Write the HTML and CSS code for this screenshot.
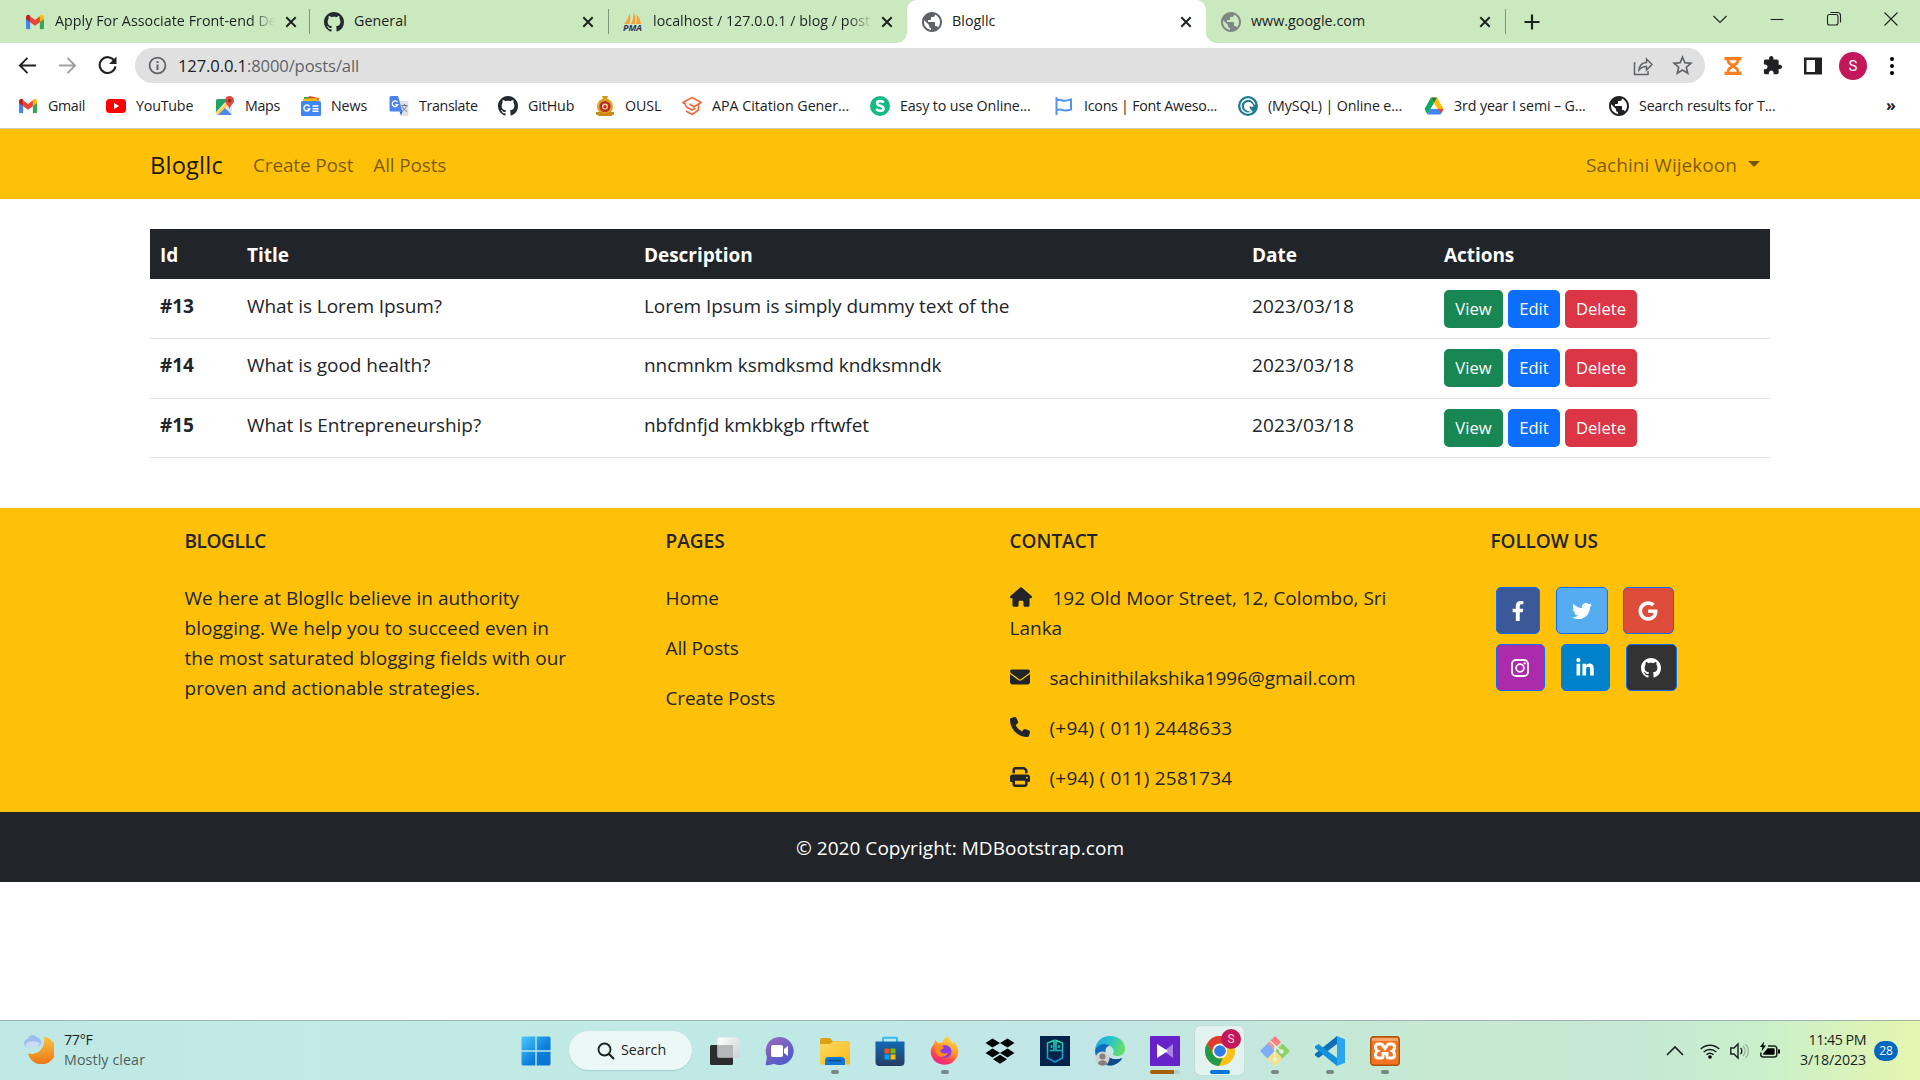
FILE: index.html
```html
<!DOCTYPE html>
<html lang="en">
<head>
<meta charset="utf-8">
<title>Blogllc</title>
<link rel="stylesheet" href="styles.css">
</head>
<body>
<svg class="defs" width="0" height="0" aria-hidden="true">
  <defs>
    <symbol id="globe" viewBox="2 2 20 20"><path d="M12 2C6.480 2 2 6.480 2 12s4.480 10 10 10 10-4.480 10-10S17.520 2 12 2zm-1 17.930c-3.950-.49-7-3.850-7-7.930 0-.62.08-1.210.21-1.790L9 15v1c0 1.100.9 2 2 2v1.930zm6.900-2.540c-.26-.81-1-1.390-1.900-1.390h-1v-3c0-.55-.45-1-1-1H8v-2h2c.55 0 1-.45 1-1V7h2c1.100 0 2-.9 2-2v-.41c2.930 1.190 5 4.060 5 7.410 0 2.080-.8 3.970-2.100 5.390z"/></symbol>
    <symbol id="github" viewBox="0 0 16 16"><path d="M8 0C3.58 0 0 3.58 0 8c0 3.54 2.29 6.53 5.47 7.59.4.07.55-.17.55-.38 0-.19-.01-.82-.01-1.49-2.01.37-2.53-.49-2.69-.94-.09-.23-.48-.94-.82-1.13-.28-.15-.68-.52-.01-.53.63-.01 1.08.58 1.23.82.72 1.21 1.87.87 2.33.66.07-.52.28-.87.51-1.07-1.78-.2-3.64-.89-3.64-3.95 0-.87.31-1.59.82-2.15-.08-.2-.36-1.02.08-2.12 0 0 .67-.21 2.2.82.64-.18 1.32-.27 2-.27.68 0 1.36.09 2 .27 1.53-1.04 2.2-.82 2.2-.82.44 1.1.16 1.92.08 2.12.51.56.82 1.27.82 2.15 0 3.07-1.87 3.75-3.65 3.95.29.25.54.73.54 1.48 0 1.07-.01 1.93-.01 2.2 0 .21.15.46.55.38A8.01 8.01 0 0 0 16 8c0-4.42-3.58-8-8-8z"/></symbol>
    <symbol id="gmail" viewBox="0 0 20 16"><path fill="#4285f4" d="M0 3v11.6C0 15.4.6 16 1.4 16h3.2V7z"/><path fill="#34a853" d="M15.4 16h3.2c.8 0 1.4-.6 1.4-1.4V3l-4.600 4z"/><path fill="#fbbc04" d="M15.400 2.200v6L20 4.700V2.500C20 .3 17.600-.8 15.900.5z"/><path fill="#ea4335" d="M4.600 8.200v-6.500L10 5.800l5.400-4.100v6.500L10 12.300z"/><path fill="#c5221f" d="M0 2.500v2.200l4.600 3.500v-7L4.100.5C2.400-.8 0 .3 0 2.500z"/></symbol>
    <symbol id="close" viewBox="0 0 12 12"><path d="M1.300 1.300l9.400 9.400m0-9.400l-9.400 9.400" stroke="#1d2420" stroke-width="2" fill="none"/></symbol>
  </defs>
</svg>

<header class="browser">
  <div class="tabs">
    <div class="tab">
      <svg class="fav" viewBox="0 0 20 20"><use href="#gmail" x="1" y="2.500" width="18" height="15"/></svg>
      <span class="tab-title fade">Apply For Associate Front-end De</span>
      <svg class="x"><use href="#close"/></svg>
    </div>
    <div class="tab">
      <svg class="fav" fill="#22292f"><use href="#github"/></svg>
      <span class="tab-title">General</span>
      <svg class="x"><use href="#close"/></svg>
    </div>
    <div class="tab last-before">
      <svg class="fav pma" viewBox="0 0 20 20"><path fill="#f9a13a" d="M1 12C4 9 6 4.500 6.500 1c1.200 3 1.200 8-.2 11zM8 12C10 8 10.500 4 10.300 0c2.300 4 2.600 8.500 1.700 12zM13 12c1-3.500 1-7 .3-10 2.700 2.500 4.400 6.500 4.700 10z"/><text x="0" y="19" font-size="8" font-weight="700" font-style="italic" fill="#33355f" textLength="19" lengthAdjust="spacingAndGlyphs">PMA</text></svg>
      <span class="tab-title fade">localhost / 127.0.0.1 / blog / post</span>
      <svg class="x"><use href="#close"/></svg>
    </div>
    <div class="tab active">
      <svg class="fav" fill="#5f6368"><use href="#globe"/></svg>
      <span class="tab-title">Blogllc</span>
      <svg class="x"><use href="#close"/></svg>
    </div>
    <div class="tab">
      <svg class="fav" fill="#7f8684"><use href="#globe"/></svg>
      <span class="tab-title">www.google.com</span>
      <svg class="x"><use href="#close"/></svg>
    </div>
    <svg class="plus" viewBox="0 0 16 16"><path d="M8 .5v15M.5 8h15" stroke="#1d2420" stroke-width="2.200"/></svg>
    <div class="window-buttons">
      <svg viewBox="0 0 16 16"><path d="M1.500 5l6.500 6.500L14.500 5"/></svg>
      <svg viewBox="0 0 16 16"><path d="M1.500 8.500h13"/></svg>
      <svg viewBox="0 0 16 16"><rect x="1.500" y="3.500" width="10.500" height="10.500" rx="2"/><path d="M4.500 1.500h7a3 3 0 0 1 3 3v7"/></svg>
      <svg viewBox="0 0 16 16"><path d="M1.500 1.500l13 13m0-13l-13 13"/></svg>
    </div>
  </div>

  <div class="toolbar">
    <svg class="nav-icon" viewBox="0 0 18 18"><path d="M17 9H2M9 1.800L1.800 9 9 16.200" stroke="#1f2124" stroke-width="1.800" fill="none"/></svg>
    <svg class="nav-icon" viewBox="0 0 18 18"><path d="M1 9h15M9 1.800L16.200 9 9 16.200" stroke="#9d9fa2" stroke-width="1.800" fill="none"/></svg>
    <svg class="nav-icon" viewBox="0 0 18 18"><path d="M15.500 4.700A7.500 7.500 0 1 0 16.500 9.800" stroke="#1f2124" stroke-width="2" fill="none"/><path d="M17.500.5v7h-7z" fill="#1f2124"/></svg>
    <div class="omnibox">
      <svg class="info" viewBox="0 0 18 18"><circle cx="9" cy="9" r="7.500" fill="none" stroke="#5f6368" stroke-width="1.700"/><path d="M9 8v5.200M9 4.800v1.900" stroke="#5f6368" stroke-width="1.900"/></svg>
      <span class="url">127.0.0.1<span>:8000/posts/all</span></span>
      <svg class="share" viewBox="0 0 20 20"><path d="M2.500 7H1.500v11.500h13.500v-3.500M6 14c.5-5 3-7.200 7.500-7.500V3l5.500 5.500-5.500 5.500v-3.500c-3.500 0-5.500 1-7.500 3.500z" fill="none" stroke="#5f6368" stroke-width="1.500"/></svg>
      <svg class="star" viewBox="2 2 20 20"><path fill="#5f6368" d="M22 9.240l-7.190-.62L12 2 9.190 8.630 2 9.240l5.460 4.730L5.820 21 12 17.270 18.180 21l-1.630-7.030L22 9.240zM12 15.400l-3.760 2.270 1-4.280-3.320-2.880 4.380-.38L12 6.100l1.710 4.040 4.380.38-3.320 2.880 1 4.280L12 15.400z"/></svg>
    </div>
    <div class="extensions">
      <svg viewBox="0 0 20 20"><path fill="#fb7e20" fill-rule="evenodd" d="M1.500 1h17v3.200h-2.200c0 3-1.800 4.300-4 5.800 2.200 1.500 4 2.800 4 5.800h2.200V19h-17v-3.200h2.200c0-3 1.800-4.300 4-5.800-2.200-1.500-4-2.800-4-5.800H1.500zM6.200 4.200C6.700 6 8.500 7 10 7.800 11.500 7 13.300 6 13.800 4.200zM6.200 15.800h7.600c-.3-1.800-2.300-3.200-3.800-4-1.500.8-3.500 2.200-3.800 4z"/></svg>
      <svg viewBox="1 1 23 23"><path fill="#202124" d="M20.500 11H19V7c0-1.100-.9-2-2-2h-4V3.500C13 2.120 11.880 1 10.500 1S8 2.120 8 3.500V5H4c-1.100 0-1.990.9-1.990 2v3.800H3.500c1.490 0 2.700 1.210 2.700 2.700s-1.210 2.700-2.700 2.700H2V20c0 1.100.9 2 2 2h3.800v-1.500c0-1.490 1.210-2.700 2.700-2.700 1.490 0 2.700 1.210 2.700 2.700V22H17c1.100 0 2-.9 2-2v-4h1.500c1.380 0 2.500-1.120 2.500-2.500S21.880 11 20.500 11z"/></svg>
      <svg viewBox="0 0 20 20"><path fill="#202124" fill-rule="evenodd" d="M1 1.500h18v17H1zM3.500 4v12H12V4z"/></svg>
      <span class="avatar">S</span>
      <svg class="dots" viewBox="0 0 20 20"><circle cx="10" cy="3" r="2"/><circle cx="10" cy="10" r="2"/><circle cx="10" cy="17" r="2"/></svg>
    </div>
  </div>

  <nav class="bookmarks">
    <a class="tight"><svg viewBox="0 0 20 20"><use href="#gmail" x="1" y="2.500" width="18" height="15"/></svg>Gmail</a>
    <a class="yt"><svg viewBox="0 0 20 20"><rect y="3" width="20" height="14" rx="3.500" fill="#f00"/><path d="M8 7v6l5.200-3z" fill="#fff"/></svg>YouTube</a>
    <a class="tight"><svg viewBox="0 0 20 20"><rect x="1" y="3" width="16" height="16" rx="2" fill="#e4e6e8"/><path d="M1 5a2 2 0 0 1 2-2h10L1 16z" fill="#1ea362"/><path d="M2 19l7-8 8 8z" fill="#4a89f3"/><path d="M1 17L14 4l2 2L3 19z" fill="#ffd04b"/><path d="M14.500 0A4.500 4.500 0 0 0 10 4.500c0 3.500 3.800 4 4.500 9 .7-5 4.500-5.500 4.500-9A4.500 4.500 0 0 0 14.500 0z" fill="#dd4b3e"/><circle cx="14.500" cy="4.500" r="1.600" fill="#80211a"/></svg>Maps</a>
    <a><svg viewBox="0 0 20 20"><path d="M3 1h11v6H3z" fill="#34a853"/><path d="M8 0l10 2-1 6H6z" fill="#ea4335"/><path d="M2 3l14-1 2 6H2z" fill="#fbbc04"/><rect y="5" width="20" height="15" rx="1.500" fill="#4285f4"/><path d="M8.500 10.500a3 3 0 1 0 .3 2.500H6.300M11.500 10h6M11.500 12.700h6M11.500 15.300h6" stroke="#fff" stroke-width="1.500" fill="none"/></svg>News</a>
    <a class="tight"><svg viewBox="0 0 20 20"><path d="M8 5h10a1.500 1.500 0 0 1 1.500 1.500v12A1.500 1.500 0 0 1 18 20h-6z" fill="#dfe1e4"/><path d="M2 0h7l4.500 15.500H2A1.500 1.500 0 0 1 .5 14V1.500A1.500 1.500 0 0 1 2 0z" fill="#4a84ee"/><path d="M8.500 6.200a2.800 2.800 0 1 0 .3 2.400H6.300" stroke="#fff" stroke-width="1.300" fill="none"/><path d="M12.500 9.500h6M15.500 8v1.500M17.500 9.500c-.8 3-2.500 4.500-4.500 6M13.500 10.500c1 2.500 2.500 4 4.500 5" stroke="#6b7682" fill="none"/><path d="M10.500 15.500h3L12 19.500z" fill="#2b5fc0"/></svg>Translate</a>
    <a><svg fill="#22292f"><use href="#github"/></svg>GitHub</a>
    <a><svg viewBox="0 0 20 20"><path d="M7 0h6l-1 3h-4z" fill="#d49a1e"/><circle cx="10" cy="10.500" r="8" fill="#e0a11b"/><circle cx="10" cy="10.500" r="5.500" fill="#b4302a"/><circle cx="10" cy="10.500" r="3" fill="#f0d9a0"/><circle cx="10" cy="10.800" r="1.700" fill="#c22"/><path d="M1 16h4l5 1.500 5-1.500h4v2.500a18 18 0 0 1-18 0z" fill="#c98a16"/></svg>OUSL</a>
    <a class="apa"><svg viewBox="0 0 20 20"><path d="M3.500 10V8L.800 6.500 10 1.500l9.200 5L12 10.800 7.500 8M3.500 10.500L10 14l3.500-2M16.500 8.500V14L10 18.500 4 15" fill="none" stroke="#f4673c" stroke-width="1.600" stroke-linejoin="round"/></svg>APA Citation Gener...</a>
    <a><svg viewBox="0 0 20 20"><circle cx="10" cy="10" r="10" fill="#11bb83"/><path d="M13.800 6.500C12 4.500 7 4.600 7 7.300c0 3 6.500 2 6.500 5.200 0 3-5.500 3-7.300.5" stroke="#fff" stroke-width="2.600" fill="none"/></svg>Easy to use Online...</a>
    <a class="fa"><svg viewBox="0 0 20 20"><path d="M2.500 1v18M3 4.500c3-2 5 .5 8 .3 2-.1 3.500-.8 6-1.300v10c-3 .8-4.500 1.300-7 .8-2.500-.6-4-1.500-7-.3" fill="none" stroke="#5394ec" stroke-width="2"/></svg>Icons | Font Aweso...</a>
    <a><svg viewBox="0 0 20 20"><circle cx="10" cy="10" r="10" fill="#217a94"/><path d="M14 15.800A7 7 0 1 1 16.800 8.500" stroke="#fff" stroke-width="1.400" fill="none"/><path d="M7 13.500C4.500 9 7 6 10.500 6c3 0 4.500 2 5 5l-4-.8c.3 2.500 1.500 4 3.500 5.300-3 .5-6-.5-8-2z" fill="#fff"/></svg>(MySQL) | Online e...</a>
    <a><svg viewBox="0 0 20 20"><path d="M7 1.500h6l6.500 11.500h-6z" fill="#fbbc04"/><path d="M7 1.500l3 5.200L3.500 18.500.5 13z" fill="#11a861"/><path d="M6.300 13h13.200l-3 5.500h-13z" fill="#4285f4"/><path d="M13.500 13h6l-2.300 4.200z" fill="#ea4335"/><path d="M7 1.500h6l-3 5.200z" fill="#188038"/></svg>3rd year I semi – G...</a>
    <a><svg fill="#202124"><use href="#globe"/></svg>Search results for T...</a>
    <b>»</b>
  </nav>
</header>

<div class="site-nav">
  <div class="container">
    <a class="brand">Blogllc</a>
    <a class="link">Create Post</a>
    <a class="link">All Posts</a>
    <a class="link user">Sachini Wijekoon <i class="caret"></i></a>
  </div>
</div>

<main>
  <table>
    <colgroup><col class="c-id"><col class="c-title"><col class="c-desc"><col class="c-date"><col></colgroup>
    <thead><tr><th>Id</th><th>Title</th><th>Description</th><th>Date</th><th>Actions</th></tr></thead>
    <tbody>
      <tr><th>#13</th><td>What is Lorem Ipsum?</td><td>Lorem Ipsum is simply dummy text of the</td><td>2023/03/18</td><td><div class="actions"><a class="btn view">View</a><a class="btn edit">Edit</a><a class="btn delete">Delete</a></div></td></tr>
      <tr><th>#14</th><td>What is good health?</td><td>nncmnkm ksmdksmd kndksmndk</td><td>2023/03/18</td><td><div class="actions"><a class="btn view">View</a><a class="btn edit">Edit</a><a class="btn delete">Delete</a></div></td></tr>
      <tr><th>#15</th><td>What Is Entrepreneurship?</td><td>nbfdnfjd kmkbkgb rftwfet</td><td>2023/03/18</td><td><div class="actions"><a class="btn view">View</a><a class="btn edit">Edit</a><a class="btn delete">Delete</a></div></td></tr>
    </tbody>
  </table>
</main>

<footer>
  <div class="columns">
    <section class="about"><h6>BLOGLLC</h6><p>We here at Blogllc believe in authority blogging. We help you to succeed even in the most saturated blogging fields with our proven and actionable strategies.</p></section>
    <section class="pages"><h6>PAGES</h6><p>Home</p><p>All Posts</p><p>Create Posts</p></section>
    <section class="contact"><h6>CONTACT</h6>
      <p><svg class="house" viewBox="0 0 576 512"><path d="M575.8 255.500c0 18-15 32.100-32 32.100h-32l.7 160.200c0 2.700-.2 5.400-.5 8.100V472c0 22.100-17.900 40-40 40H392c-22.100 0-40-17.900-40-40v-88c0-17.700-14.300-32-32-32h-64c-17.700 0-32 14.300-32 32v88c0 22.100-17.900 40-40 40h-80c-22.100 0-40-17.900-40-40V287.600H32c-18 0-32-14-32-32.100 0-9 3-17 10-24L266.400 8c7-7 15-8 22-8s15 2 21 7l255.400 224.500c8 7 12 15 11 24z"/></svg>192 Old Moor Street, 12, Colombo, Sri Lanka</p>
      <p><svg viewBox="0 0 512 512"><path d="M48 64C21.500 64 0 85.500 0 112c0 15.100 7.100 29.300 19.200 38.400l217.600 163.200c11.400 8.500 27 8.500 38.400 0l217.600-163.200c12.100-9.100 19.200-23.300 19.200-38.400 0-26.500-21.500-48-48-48zM0 176v208c0 35.300 28.700 64 64 64h384c35.300 0 64-28.700 64-64V176L294.400 339.200c-22.800 17.100-54 17.100-76.800 0z"/></svg><span class="mail">sachinithilakshika1996@gmail.com</span></p>
      <p class="phone"><svg viewBox="0 0 512 512"><path d="M164.900 24.600c-7.700-18.600-28-28.500-47.400-23.200l-88 24C12.100 30.200 0 46 0 64c0 247.400 200.600 448 448 448 18 0 33.800-12.100 38.600-29.500l24-88c5.300-19.400-4.600-39.700-23.200-47.400l-96-40c-16.300-6.800-35.200-2.100-46.300 11.600L304.700 368C234.300 334.700 177.300 277.700 144 207.300l49.300-40.300c13.700-11.200 18.400-30 11.600-46.300z"/></svg>(+94) ( 011) 2448633</p>
      <p class="phone"><svg viewBox="0 0 512 512"><path fill-rule="evenodd" d="M128 0C92.700 0 64 28.700 64 64v96h64V64h226.700L384 93.300V160h64V93.300c0-17-6.700-33.300-18.700-45.300L400 18.700C388 6.700 371.700 0 354.700 0zM384 352v96H128v-96zm64 32h32c17.700 0 32-14.300 32-32v-96c0-35.300-28.700-64-64-64H64c-35.300 0-64 28.700-64 64v96c0 17.700 14.300 32 32 32h32v64c0 35.300 28.700 64 64 64h256c35.300 0 64-28.700 64-64zM432 248a24 24 0 1 1 0 48 24 24 0 1 1 0-48z"/></svg>(+94) ( 011) 2581734</p>
    </section>
    <section class="follow"><h6>FOLLOW US</h6>
      <div class="socials">
        <a class="fb"><svg viewBox="0 0 320 512"><path d="M279.140 288l14.220-92.660h-88.910v-60.130c0-25.350 12.420-50.060 52.240-50.060h40.420V6.260S260.430 0 225.360 0c-73.220 0-121.080 44.380-121.080 124.720v70.620H22.890V288h81.390v224h100.170V288z"/></svg></a>
        <a class="tw"><svg viewBox="0 0 512 512"><path d="M459.370 151.716c.325 4.548.325 9.097.325 13.645 0 138.720-105.583 298.558-298.558 298.558-59.452 0-114.680-17.219-161.137-47.106 8.447.974 16.568 1.299 25.340 1.299 49.055 0 94.213-16.568 130.274-44.832-46.132-.975-84.792-31.188-98.112-72.772 6.498.974 12.995 1.624 19.818 1.624 9.421 0 18.843-1.300 27.614-3.573-48.081-9.747-84.143-51.980-84.143-102.985v-1.299c13.969 7.797 30.214 12.670 47.431 13.319-28.264-18.843-46.781-51.005-46.781-87.391 0-19.492 5.197-37.360 14.294-52.954 51.655 63.675 129.300 105.258 216.365 109.807-1.624-7.797-2.599-15.918-2.599-24.040 0-57.828 46.782-104.934 104.934-104.934 30.213 0 57.502 12.670 76.670 33.137 23.715-4.548 46.456-13.320 66.599-25.340-7.798 24.366-24.366 44.833-46.132 57.827 21.117-2.273 41.584-8.122 60.426-16.243-14.292 20.791-32.161 39.308-52.628 54.253z"/></svg></a>
        <a class="gg"><svg viewBox="0 0 488 512"><path d="M488 261.800C488 403.300 391.100 504 248 504 110.800 504 0 393.200 0 256S110.800 8 248 8c66.800 0 123 24.500 166.300 64.900l-67.500 64.900C258.500 52.600 94.300 116.600 94.300 256c0 86.500 69.100 156.600 153.700 156.600 98.200 0 135-70.400 140.800-106.900H248v-85.300h236.100c2.300 12.700 3.900 24.900 3.900 41.400z"/></svg></a>
      </div>
      <div class="socials">
        <a class="ig"><svg viewBox="0 0 18 20"><rect x="1" y="2" width="16" height="16" rx="4" fill="none" stroke="#fff" stroke-width="1.800"/><circle cx="9" cy="10" r="3.900" fill="none" stroke="#fff" stroke-width="1.700"/><circle cx="13.700" cy="5.400" r="1.100"/></svg></a>
        <a class="li"><svg viewBox="0 0 448 512"><path d="M100.280 448H7.400V148.900h92.880zM53.790 108.100C24.090 108.100 0 83.500 0 53.800a53.790 53.790 0 0 1 107.580 0c0 29.700-24.100 54.300-53.790 54.300zM447.900 448h-92.680V302.400c0-34.700-.7-79.200-48.290-79.200-48.290 0-55.690 37.700-55.690 76.700V448h-92.780V148.900h89.080v40.800h1.300c12.400-23.500 42.690-48.300 87.880-48.300 94 0 111.280 61.900 111.280 142.300V448z"/></svg></a>
        <a class="gh"><svg><use href="#github"/></svg></a>
      </div>
    </section>
  </div>
  <div class="copyright">© 2020 Copyright: MDBootstrap.com</div>
</footer>

<div class="taskbar">
  <div class="weather">
    <svg viewBox="0 0 30 30"><defs><linearGradient id="moon" x2="0" y2="1"><stop stop-color="#f6c443"/><stop offset="1" stop-color="#ee7716"/></linearGradient></defs><path d="M20 2.500a14 14 0 1 1-16 17c9 2 17.500-4 16-17z" fill="url(#moon)"/><path d="M4.500 13a4 4 0 0 1-.5-8 5 5 0 0 1 9-1.500 4.500 4.500 0 0 1 4 6c-.5 2-2 3.500-4 3.500z" fill="#9cbdf0"/><path d="M4 8c4-1 7-1 12 1-1 3-2 4-4 4H4.500c-3 0-4-3-.5-5z" fill="#c9dcfb"/></svg>
    <div><div class="temp">77°F</div><div class="sky">Mostly clear</div></div>
  </div>
  <svg class="start" viewBox="0 0 30 30"><defs><linearGradient id="win" x2="1" y2="1"><stop stop-color="#4cc9fb"/><stop offset=".6" stop-color="#0a7edc"/><stop offset="1" stop-color="#0a6fd0"/></linearGradient></defs><path fill="url(#win)" d="M.500 2a1.500 1.500 0 0 1 1.500-1.500h12.300v13.800H.500zM15.700.500H28a1.500 1.500 0 0 1 1.500 1.500v12.300H15.700zM.500 15.700h13.800v13.800H2A1.500 1.500 0 0 1 .500 28zM15.700 15.700h13.800V28a1.500 1.500 0 0 1-1.500 1.500H15.700z"/></svg>
  <div class="search"><svg viewBox="0 0 18 18"><circle cx="7.500" cy="7.500" r="6" fill="none" stroke="#1b1f1f" stroke-width="1.800"/><path d="M12 12l5 5" stroke="#1b1f1f" stroke-width="2.200"/></svg><span>Search</span></div>
  <div class="apps">
    <div class="app"><svg viewBox="0 0 30 30"><defs><linearGradient id="tv" x2="1" y2="1"><stop stop-color="#fff"/><stop offset="1" stop-color="#ccd1d1"/></linearGradient></defs><rect y="9" width="23" height="20" rx="1.500" fill="#2c2c2c"/><rect x="7.500" y="1.500" width="22" height="20" rx="1.500" fill="url(#tv)"/><path d="M7.500 9H23v12.500H9a1.500 1.500 0 0 1-1.500-1.500z" fill="#b5b8b8"/></svg></div>
    <div class="app"><svg viewBox="0 0 30 30"><defs><linearGradient id="chat" x2=".6" y2="1"><stop stop-color="#9a6bbb"/><stop offset="1" stop-color="#5059c9"/></linearGradient></defs><path d="M15 1a14 14 0 1 1-6 26.800C6 29 3 29.500.500 29L2 21A14 14 0 0 1 15 1z" fill="url(#chat)"/><rect x="6" y="9" width="12" height="12" rx="2" fill="#fff"/><path d="M19 13l4-3v10l-4-3z" fill="#fff"/></svg></div>
    <div class="app"><svg viewBox="0 0 30 30"><defs><linearGradient id="fold" x2="1" y2="1"><stop stop-color="#ffd964"/><stop offset="1" stop-color="#fbb917"/></linearGradient></defs><path d="M0 3.500A1.500 1.500 0 0 1 1.500 2H10l3 3.500H28.500A1.500 1.500 0 0 1 30 7v6H0z" fill="#e0a016"/><path d="M0 8h10l3-2.500h16A1 1 0 0 1 30 6.500V27a1.500 1.500 0 0 1-1.500 1.500h-27A1.500 1.500 0 0 1 0 27z" fill="url(#fold)"/><path d="M5 29v-4.500A3.500 3.500 0 0 1 8.500 21h13a3.500 3.500 0 0 1 3.500 3.500V29z" fill="#1077cf"/><path d="M8.500 24.700h13" stroke="#0b4c94" stroke-width="1.400"/></svg><i></i></div>
    <div class="app"><svg viewBox="0 0 30 30"><defs><linearGradient id="store" x2="0" y2="1"><stop stop-color="#116ab3"/><stop offset="1" stop-color="#253c63"/></linearGradient></defs><path d="M8 8V2.700a1 1 0 0 1 1-1h12a1 1 0 0 1 1 1V8" fill="none" stroke="#35b8f1" stroke-width="2"/><path d="M.500 5.500h29V26a4 4 0 0 1-4 4h-21a4 4 0 0 1-4-4z" fill="url(#store)"/><path d="M9.500 12.500h5v5h-5z" fill="#f25022"/><path d="M15.500 12.500h5v5h-5z" fill="#7fba00"/><path d="M9.500 18.500h5v5h-5z" fill="#00a4ef"/><path d="M15.500 18.500h5v5h-5z" fill="#ffb900"/></svg></div>
    <div class="app"><svg viewBox="0 0 30 30"><defs><linearGradient id="fox" x1=".8" y1="0" x2=".3" y2="1"><stop stop-color="#ffe84a"/><stop offset=".45" stop-color="#ff9a2b"/><stop offset=".75" stop-color="#ff4052"/><stop offset="1" stop-color="#e8228c"/></linearGradient></defs><path d="M4 8l1-4 3 3 4 0c1-4 4-6 6-7 1 4 4 5 5 8l1.500-2c4 5 5 10 2.500 15A14 14 0 0 1 1.500 20C0 15 1 11 4 8z" fill="url(#fox)"/><circle cx="15" cy="15.500" r="6.500" fill="#8a3de0"/><path d="M5 11c4-3 8-1 9 1l-4 2.500c1 3 5 4 8 2-1 5-9 6-12 1z" fill="#ff8a1e"/></svg><i></i></div>
    <div class="app"><svg viewBox="0 0 30 30"><path d="M7.500 2.500L15 7l-7.500 4.500L.500 7zM22.500 2.500L29.500 7l-7 4.500L15 7zM7.500 12.500L15 17l-7.500 4.500-7-4.500zM22.500 12.500l7 4.500-7 4.500L15 17zM15 18.800l7 4.400-7 4.500-7-4.500z"/></svg></div>
    <div class="app"><svg viewBox="0 0 30 30"><defs><linearGradient id="pg" x2="0" y2="1"><stop stop-color="#22d6ad"/><stop offset="1" stop-color="#168bd6"/></linearGradient></defs><path d="M0 0h30v30H0z" fill="#04234a"/><path d="M7.500 20V7l6.500-2.500v10H9.500M7.500 17v5l7.500 4 7.500-4V7L16 4.500v10h6M19 9v3M11.500 9v3" fill="none" stroke="url(#pg)" stroke-width="1.600"/></svg></div>
    <div class="app"><svg viewBox="0 0 30 30"><defs><linearGradient id="edge" x2="1" y2=".3"><stop stop-color="#2b9fe0"/><stop offset=".5" stop-color="#25c1ce"/><stop offset="1" stop-color="#62dc6c"/></linearGradient></defs><path d="M0 14C1 5 7 0 15 0c9 0 15 6 15 12.500 0 5-3.500 7.500-7.500 7.500-3 0-5-1-4.500-2.500C20 15 18 11 13 9 8 7.500 3 9.500 0 14z" fill="url(#edge)"/><path d="M0 14c3-6 10-8 15-4-3 0-5 2.500-4.500 6 .7 6 8 9 16 6.500C22 30 12 31 6 27 2 24 0 19 0 14z" fill="#0f6cbd"/><path d="M10.500 16c1 6 8 9 17 6-4 6-9 8-14 7.500-4-3-5-9-3-13.500z" fill="#114a8b"/><circle cx="7.500" cy="22.500" r="7" fill="#d3d0cd"/><circle cx="7.500" cy="20.500" r="3" fill="#85807b"/><path d="M3 28c0-5 9-5 9 0a7 7 0 0 1-9 0z" fill="#85807b"/></svg></div>
    <div class="app"><svg viewBox="0 0 30 30"><rect width="30" height="30" rx="1" fill="#6822c9"/><path d="M23 8v14l-9-7z" fill="#ab85e6"/><path d="M7 8l11 7-11 7z" fill="#fff"/></svg><i class="busy"></i></div>
    <div class="app current"><svg viewBox="0 0 30 30"><circle cx="15" cy="15" r="15" fill="#fbc116"/><path d="M2 7.500A15 15 0 0 1 28 7.500H15A7.500 7.500 0 0 0 8.500 19z" fill="#df3b31"/><path d="M2 7.500L8.500 18.700A7.500 7.500 0 0 0 18 22l-4 8A15 15 0 0 1 2 7.500z" fill="#239a4b"/><circle cx="15" cy="15" r="7.300" fill="#fff"/><circle cx="15" cy="15" r="5.800" fill="#2d7cea"/></svg><b>S</b><i class="on"></i></div>
    <div class="app"><svg viewBox="0 0 30 30"><path d="M15 0l6 6-6 6-6-6z" fill="#fb7d7d"/><path d="M9 6l6 6-3 3-6-6z" fill="#fb7d7d" opacity=".7"/><path d="M7.500 7.500L15 15l-7.500 7.500L0 15z" fill="#7eacf8"/><path d="M22.500 7.500L30 15l-7.500 7.500L15 15z" fill="#8cd066"/><path d="M15 15l7.500 7.500L15 30l-7.500-7.500z" fill="#fae07c"/><path d="M10 5l11 10M15 9v16" stroke="#e4eee4" stroke-width="1.500"/><circle cx="21.500" cy="15.500" r="2.200" fill="#e4eee4"/><circle cx="15" cy="23.500" r="2.200" fill="#e4eee4"/></svg><i></i></div>
    <div class="app"><svg viewBox="0 0 30 30"><path d="M22 0v8L3.500 22 0 19.500v-1.700z" fill="#0e70b8"/><path d="M0 12v-1.700L3.500 8 22 22v8z" fill="#1590dc"/><path d="M22 0l8 3.300v23.400L22 30z" fill="#2aa5f2"/></svg><i></i></div>
    <div class="app"><svg viewBox="0 0 30 30"><rect x=".7" y=".7" width="28.600" height="28.600" rx="3" fill="#f37423" stroke="#a9540f" stroke-width="1.400"/><path d="M2 2h26v3H2z" fill="#f7a76d"/><path d="M8.500 8h2q2 0 3 2.500l1.500 2 1.500-2q1-2.500 3-2.500h2q3 0 3 3t-2 4q2 1 2 4t-3 3h-2.500q-2 0-2-2v-2.500h-4V20q0 2-2 2H8.500q-3 0-3-3t2-4q-2-1-2-4t3-3z" fill="none" stroke="#fff" stroke-width="3"/></svg><i></i></div>
  </div>
  <div class="tray">
    <svg class="t-up" viewBox="0 0 20 20"><path d="M2 14l8-8 8 8" fill="none" stroke="#1b1f1f" stroke-width="1.600"/></svg>
    <svg class="t-wifi" viewBox="0 0 20 20"><path d="M.800 8a13 13 0 0 1 18.400 0M3.700 11a9 9 0 0 1 12.600 0M6.500 13.800a5 5 0 0 1 7 0" fill="none" stroke="#1b1f1f" stroke-width="1.500"/><circle cx="10" cy="16" r="1.800"/></svg>
    <svg class="t-vol" viewBox="0 0 20 20"><path d="M.800 7H4l4-4v14l-4-4H.800z" fill="none" stroke="#1b1f1f" stroke-width="1.400"/><path d="M10.500 7a4 4 0 0 1 0 6" fill="none" stroke="#1b1f1f" stroke-width="1.400"/><path d="M13 5a7 7 0 0 1 0 10M15.500 3a10 10 0 0 1 0 14" fill="none" stroke="#97b29b" stroke-width="1.300"/></svg>
    <svg class="t-bat" viewBox="0 0 20 20"><path d="M8 5h6.300a2.500 2.500 0 0 1 2.500 2.500v6a2.500 2.500 0 0 1-2.500 2.500h-11A2.500 2.500 0 0 1 .800 13.500V11.500" fill="none" stroke="#1b1f1f" stroke-width="1.500"/><path d="M7.500 7.200h6.100a1 1 0 0 1 1 1v4.600a1 1 0 0 1-1 1H4a1 1 0 0 1-1-1z"/><path d="M18 8.500h2v4h-2zM4 .500L0 6h2.500L1.500 10.500 6 4.500H3.500z"/></svg>
    <div class="clock"><div class="time">11:45 PM</div><div>3/18/2023</div></div>
    <span class="count">28</span>
  </div>
</div>
</body>
</html>
```
FILE: styles.css
```css
* { box-sizing: border-box; }
body {
  margin: 0;
  height: 1080px;
  overflow: hidden;
  display: flex;
  flex-direction: column;
  background: #fff;
  color: #212529;
  font: 19px/30px "Open Sans", "Noto Sans", sans-serif;
}
svg { display: block; flex: none; }
.defs { position: absolute; }

/* Browser frame */
.browser { height: 129px; border-bottom: 1px solid #c9c9c9; font-size: 14.25px; line-height: 20px; color: #1d2124; }
.tabs { height: 43px; display: flex; align-items: center; padding-left: 10px; background: #cbe9be; }
.tab { width: 299px; height: 43px; display: flex; align-items: center; padding: 0 14px 0 15px; position: relative; }
.tab::after { content: ""; width: 1px; height: 25px; background: #7e9677; position: absolute; right: -1px; top: 9px; }
.tab.last-before::after, .tab.active::after { display: none; }
.tab.active { background: #fff; border-radius: 10px 10px 0 0; }
.tab.active::before {
  content: ""; position: absolute; left: -10px; right: -10px; bottom: 0; height: 10px;
  background:
    radial-gradient(circle at 0 0, #cbe9be 9.5px, #fff 10px) left / 10px 10px no-repeat,
    radial-gradient(circle at 100% 0, #cbe9be 9.5px, #fff 10px) right / 10px 10px no-repeat;
}
.fav { width: 20px; height: 20px; margin-right: 10px; }
.tab-title { width: 221px; margin-top: -2px; white-space: nowrap; letter-spacing: .05px; }
.fade { -webkit-mask-image: linear-gradient(90deg, #000 195px, transparent 220px); mask-image: linear-gradient(90deg, #000 195px, transparent 220px); }
.x { width: 12px; height: 12px; margin-left: 9px; }
.plus { width: 16px; height: 16px; margin-left: 19px; }
.window-buttons { margin: -6px 21px 0 auto; display: flex; gap: 41px; }
.window-buttons svg { width: 16px; height: 16px; fill: none; stroke: #222; stroke-width: 1.1; }

.toolbar { height: 45px; display: flex; align-items: center; padding: 0 17px 0 18px; }
.nav-icon { width: 19px; height: 19px; margin-right: 21px; }
.omnibox { width: 1570px; height: 35px; margin-left: -3px; border-radius: 18px; background: #e0e0e0; display: flex; align-items: center; padding: 0 12px 0 13px; }
.info { width: 19px; height: 19px; margin-right: 11px; }
.url { font-size: 16.6px; letter-spacing: -.12px; color: #202124; margin-right: auto; }
.url span { color: #5f6368; }
.share { width: 20px; height: 20px; margin-right: 19px; }
.star { width: 21px; height: 21px; }
.extensions { display: flex; align-items: center; margin-left: 18px; }
.extensions svg { width: 20px; height: 20px; margin-right: 20px; }
.avatar { width: 28px; height: 28px; margin: 0 15px 0 -4px; border-radius: 50%; background: #c2185b; color: #fff; font: 15px/28px Roboto, sans-serif; text-align: center; }
.extensions .dots { margin: 0; }

.bookmarks {
  height: 35px; padding-left: 18px; display: grid; align-items: center;
  grid-template-columns: 88px 109px 86px 88px 109px 97px 87px 188px 184px 184px 186px 185px 277px 1fr;
}
.bookmarks a { display: flex; align-items: center; white-space: nowrap; letter-spacing: -.12px; }
.bookmarks a.tight { letter-spacing: -.35px; }
.bookmarks a.yt { letter-spacing: -.2px; }
.bookmarks a.apa { letter-spacing: -.02px; }
.bookmarks a.fa { letter-spacing: -.25px; }
.bookmarks svg { width: 20px; height: 20px; margin-right: 10px; }
.bookmarks b { font-size: 16px; margin-top: -2px; }

/* Site navigation */
.site-nav { height: 70px; background: #ffc107; }
.container { width: 1620px; height: 70px; margin: 0 auto; display: flex; align-items: center; padding-top: 2px; }
.brand { font-size: 23.75px; margin-right: 30px; color: rgba(0, 0, 0, .9); letter-spacing: .15px; }
.link { color: rgba(0, 0, 0, .55); margin-right: 20px; letter-spacing: -.15px; }
.user { margin: 0 10px 0 auto; letter-spacing: .05px; display: flex; align-items: center; }
.caret { margin-left: 11px; margin-top: -3px; border: 6px solid transparent; border-top-color: rgba(0, 0, 0, .55); border-bottom: 0; }

/* Posts table */
main { padding: 30px 150px 0; height: 309px; }
table { width: 1620px; table-layout: fixed; border-collapse: separate; border-spacing: 0; letter-spacing: -.05px; }
.c-id { width: 86px; }
.c-title { width: 398px; }
.c-desc { width: 608px; }
.c-date { width: 192px; }
th, td { padding: 11px 10px 0; text-align: left; vertical-align: top; }
th:nth-child(2), td:nth-child(2) { padding-left: 11px; }
thead th { background: #212529; color: #fff; height: 50px; }
tbody th, tbody td { height: 60px; border-bottom: 1px solid #dee2e6; }
tbody tr:first-child > * { padding-top: 12px; }
tbody tr:last-child > * { height: 59px; }
tbody td:nth-child(4) { letter-spacing: .1px; }
tbody td:last-child { padding-top: 10px; }
tbody tr:first-child td:last-child { padding-top: 11px; }
.actions { display: flex; gap: 5px; letter-spacing: 0; }
.btn { height: 38px; border-radius: 5px; color: #fff; font-size: 16.6px; line-height: 38px; text-align: center; }
.view { width: 59px; background: #198754; }
.edit { width: 52px; background: #0d6efd; }
.delete { width: 72px; background: #dc3545; }

/* Footer */
footer { height: 374px; background: #ffc107; }
.columns { height: 304px; padding: 18px 0 0 184.5px; display: grid; grid-template-columns: 481px 344px 481px 1fr; }
h6 { margin: 0 0 27px; font-size: 19px; font-weight: 600; line-height: 30px; letter-spacing: 0; }
.about h6 { letter-spacing: -.4px; }
p { margin: 0 0 20px; }
.about p { width: 392px; letter-spacing: .03px; }
.pages p { letter-spacing: -.12px; }
.contact p { width: 392px; }
.contact svg { width: 20px; height: 20px; margin: 0 20px -2px 0; display: inline-block; fill: #212529; }
.contact svg.house { width: 22px; margin-right: 21px; }
.mail { letter-spacing: -.06px; }
.contact .phone { letter-spacing: .22px; }
.follow h6 { letter-spacing: -.1px; margin-bottom: 31px; }
.socials { display: flex; padding-left: 5px; margin-bottom: 10px; }
.socials a { height: 47px; border: 1px solid #0d6efd; border-radius: 5px; display: flex; align-items: center; justify-content: center; }
.socials svg { width: 20px; height: 20px; fill: #fff; }
.fb { width: 44px; background: #3b5998; margin-right: 16px; }
.tw { width: 52px; background: #55acee; margin-right: 15px; }
.gg { width: 51px; background: #dd4b39; }
.ig { width: 49px; background: #ac2bac; margin-right: 16px; }
.li { width: 49px; background: #0082ca; margin-right: 16px; }
.gh { width: 51px; background: #333; }
.copyright { height: 70px; padding-top: 21px; background: #212529; color: #fff; text-align: center; letter-spacing: .05px; }

/* Taskbar */
.taskbar {
  height: 60px; margin-top: auto; display: flex; align-items: center; border-top: 1px solid #9fb3b0;
  background: linear-gradient(90deg, #bfe8e5 0, #c1ebe4 16%, #c0e8e6 45%, #c1e6e6 56%, #c4e8dc 66%, #c7e9cf 76%, #c6e8d5 85%, #c9f0ca 92%, #dff4b4 98%, #e4f6b0 100%);
  font-size: 14.25px; line-height: 20px; color: #1b1f1f;
}
.weather { width: 521px; padding-left: 24px; display: flex; align-items: center; }
.weather > div, .clock, .search span { margin-top: -2px; }
.weather svg { width: 30px; height: 30px; margin: -4px 10px 0 0; }
.temp { letter-spacing: -.3px; }
.sky { color: #4c5f5d; letter-spacing: .1px; }
.start { width: 30px; height: 30px; }
.search { width: 123px; height: 39px; margin: 0 5px 0 18px; border-radius: 20px; background: #ebf8f6; box-shadow: 0 1px 1px rgba(0, 60, 60, .15); display: flex; align-items: center; padding-left: 28px; }
.search svg { width: 18px; height: 18px; margin-right: 6px; }
.apps { display: flex; height: 59px; }
.app { width: 55px; display: flex; align-items: center; justify-content: center; position: relative; }
.app svg { width: 30px; height: 30px; z-index: 1; }
.app i { position: absolute; bottom: 6px; width: 8px; height: 4px; border-radius: 2px; background: #758985; }
.app i.busy { width: 30px; background: linear-gradient(90deg, #a76000 24px, #b1d3d0 24px); }
.app i.on { width: 20px; background: #0078d4; }
.current::before { content: ""; position: absolute; left: 3px; top: 5px; width: 49px; height: 49px; border-radius: 5px; background: #e2f3ef; box-shadow: 0 0 1px #98b5ae; }
.app b { position: absolute; z-index: 2; left: 29px; top: 8px; width: 20px; height: 20px; border-radius: 50%; background: #c2185b; color: #f5c9da; font: 12px/20px Roboto, sans-serif; text-align: center; }
.tray { margin-left: auto; padding-right: 22px; display: flex; align-items: center; }
.tray svg { width: 20px; height: 20px; }
.t-up { margin-right: 15px; }
.t-wifi { margin-right: 10px; }
.t-vol { margin-right: 10px; }
.clock { width: 86px; text-align: right; letter-spacing: -.17px; }
.time { letter-spacing: -.5px; }
.count { margin-left: 8px; width: 24px; height: 20px; border-radius: 10px; background: #0067c0; color: #fff; font-size: 12px; text-align: center; }
```
